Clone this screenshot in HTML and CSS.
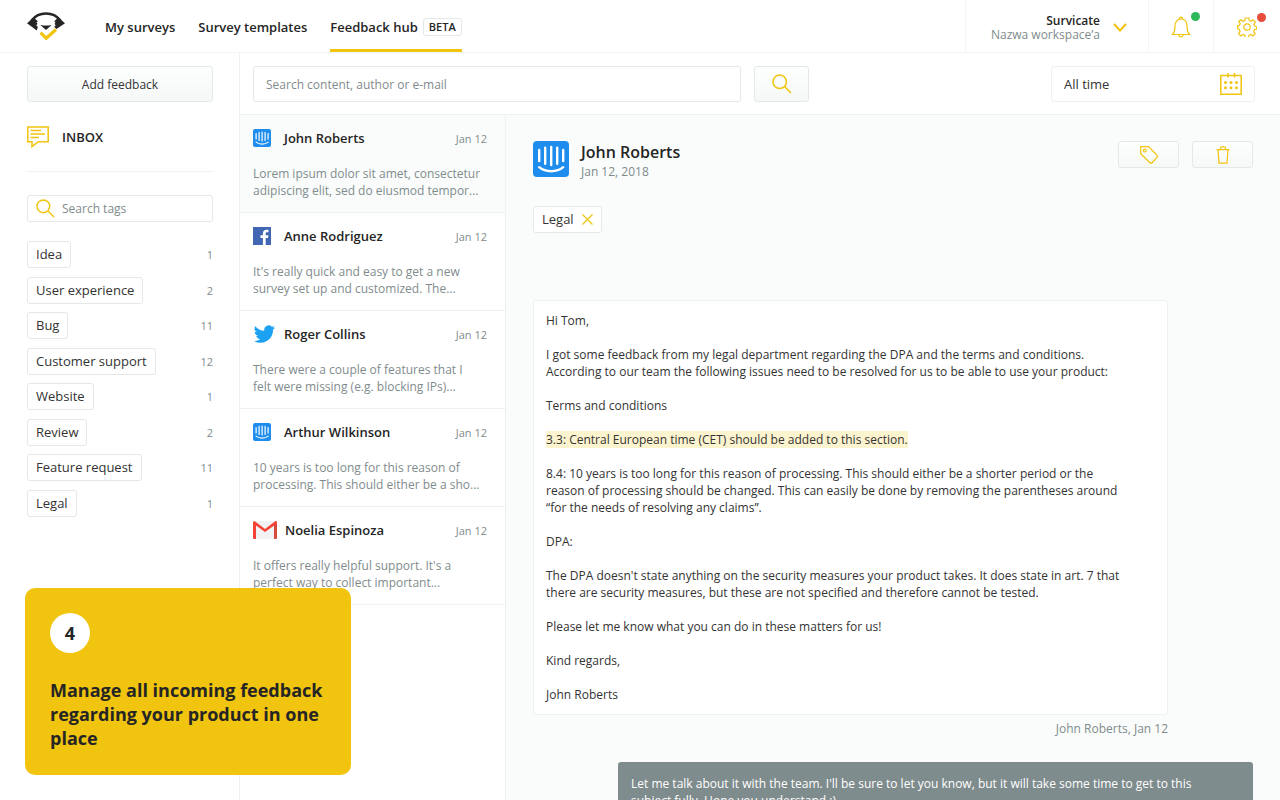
FILE: index.html
```html
<!DOCTYPE html>
<html lang="en">
<head>
<meta charset="utf-8">
<meta name="viewport" content="width=device-width, initial-scale=1">
<title>Feedback hub</title>
<link rel="stylesheet" href="styles.css">
</head>
<body>
<svg class="sprite" aria-hidden="true">
  <symbol id="intercom" viewBox="0 0 36 36">
    <rect width="36" height="36" rx="4" fill="#1f8ded"/>
    <g stroke="#fff" stroke-width="2.4" stroke-linecap="round" fill="none">
      <path d="M6.2 9v11M12.2 6.800v16M18.200 6v18M24.200 6.800v16M30.200 9v11"/>
      <path d="M6.200 26.200c6.500 5.400 17.500 5.400 24 0"/>
    </g>
  </symbol>
  <symbol id="magnifier" viewBox="0 0 20 20">
    <circle cx="7.700" cy="7.700" r="6.700"/><path d="M12.600 12.600L19 19"/>
  </symbol>
</svg>
<div class="app">
  <header class="header">
    <a class="logo" href="#" aria-label="Survicate">
      <svg width="38" height="29" viewBox="0 0 38 29">
        <path d="M4.500 8.500C12 -.8 26 -.8 33.500 8.500" fill="none" stroke="#252525" stroke-width="2.600"/>
        <path d="M0 11.300L6.600 5.600 10.800 9.300 9.500 10.600 10.500 11.800 9.300 13.200 10.800 15 9.800 18.500zM38 11.300L31.400 5.600 27.200 9.300 28.500 10.600 27.500 11.800 28.700 13.200 27.200 15 29.500 17z" fill="#252525"/>
        <path d="M13.300 13Q19 14.200 24.700 13L19 18z" fill="#252525"/>
        <path d="M13.600 20.700L19.200 26.300 29 17.500" fill="none" stroke="#f1c40f" stroke-width="3.200"/>
      </svg>
    </a>
    <nav class="nav">
      <a href="#">My surveys</a>
      <a href="#">Survey templates</a>
      <a href="#" class="active">Feedback hub <span class="beta">BETA</span></a>
    </nav>
    <button class="workspace">
      <span class="workspace-text"><strong>Survicate</strong><span>Nazwa workspace’a</span></span>
      <svg class="line bold" width="14" height="9" viewBox="0 0 14 9"><path d="M1 1l6 6.500L13 1"/></svg>
    </button>
    <button class="head-icon" aria-label="Notifications">
      <span class="icon-wrap">
        <svg class="line thin" width="20" height="22" viewBox="0 0 20 22"><path d="M1.500 18.500C3.800 16 4 14 4 10.500 4 6 6 3 10 3s6 3 6 7.500c0 3.500.2 5.500 2.500 8zM8.500 3V1.800Q10 .3 11.500 1.800V3M7.800 18.500Q8 21 10 21t2.200-2.500"/></svg>
        <span class="dot green"></span>
      </span>
    </button>
    <button class="head-icon settings" aria-label="Settings">
      <span class="icon-wrap">
        <svg class="line thin" width="20" height="20" viewBox="0 0 20 20"><circle cx="10" cy="10" r="3.200"/><path d="M8.300 1h3.400l.5 2.600 1.700.7 2.200-1.500 2.300 2.300-1.500 2.200.7 1.700 2.200.5v1.400l-.1 1.300-2.300.5-.7 1.700 1.500 2.200-2.300 2.300-2.200-1.500-1.700.7-.5 2.500H8.300l-.5-2.500-1.700-.7-2.200 1.500-2.300-2.300 1.500-2.200-.7-1.700L.6 11.700V8.800l1.900-.5.700-1.700-1.500-2.200L4 2.800l2.100 1.500 1.700-.7z"/></svg>
        <span class="dot red"></span>
      </span>
    </button>
  </header>

  <aside class="sidebar">
    <button class="btn add">Add feedback</button>
    <a class="inbox" href="#">
      <svg class="line" width="22" height="22" viewBox="0 0 22 22"><path d="M.8 1h20.400v14.700H11.400L5 20.600V15.700H.8zM3.500 4.500H14M3.500 8H18M3.500 11.500H12"/></svg>
      INBOX
    </a>
    <label class="tag-search">
      <svg class="line" width="19" height="19"><use href="#magnifier"/></svg>
      <input type="search" placeholder="Search tags" aria-label="Search tags">
    </label>
    <ul class="tags">
      <li><button class="chip">Idea</button><span>1</span></li>
      <li><button class="chip">User experience</button><span>2</span></li>
      <li><button class="chip">Bug</button><span>11</span></li>
      <li><button class="chip">Customer support</button><span>12</span></li>
      <li><button class="chip">Website</button><span>1</span></li>
      <li><button class="chip">Review</button><span>2</span></li>
      <li><button class="chip">Feature request</button><span>11</span></li>
      <li><button class="chip">Legal</button><span>1</span></li>
    </ul>
  </aside>

  <main class="main">
    <form class="toolbar">
      <input class="search" type="search" placeholder="Search content, author or e-mail" aria-label="Search feedback">
      <button class="btn search-btn" type="button" aria-label="Search"><svg class="line" width="20" height="20"><use href="#magnifier"/></svg></button>
      <button class="period" type="button">All time
        <svg class="line" width="22" height="22" viewBox="0 0 22 22"><path d="M.8 2.500h20.400v18.700H.8zM8 0v4.500M14.500 0v4.500"/><g class="solid"><circle cx="5.500" cy="9.500" r="1.500"/><circle cx="11" cy="9.500" r="1.500"/><circle cx="16.500" cy="9.500" r="1.500"/><circle cx="5.500" cy="14.700" r="1.500"/><circle cx="11" cy="14.700" r="1.500"/><circle cx="16.500" cy="14.700" r="1.500"/></g></svg>
      </button>
    </form>
    <div class="columns">
      <ul class="list">
        <li class="item selected">
          <div class="item-head"><svg width="18" height="18"><use href="#intercom"/></svg><h2>John Roberts</h2><time>Jan 12</time></div>
          <p>Lorem ipsum dolor sit amet, consectetur<br>adipiscing elit, sed do eiusmod tempor...</p>
        </li>
        <li class="item">
          <div class="item-head"><svg width="18" height="18" viewBox="0 0 18 18"><path fill="#4267b2" d="M0 0h18v18H0z"/><path fill="#fff" d="M9.900 18v-7H7.500V8.200h2.400V6.300c0-2.400 1.400-3.600 3.600-3.600l2 .1v2.500h-1.400c-1.100 0-1.400.6-1.400 1.400v1.500h2.700l-.4 2.800h-2.300v7z"/></svg><h2>Anne Rodriguez</h2><time>Jan 12</time></div>
          <p>It's really quick and easy to get a new<br>survey set up and customized. The...</p>
        </li>
        <li class="item">
          <div class="item-head"><svg class="wide" width="23" height="18" viewBox="0 1.800 24 20.200"><path fill="#1da1f2" d="M23.950 4.570a10 10 0 0 1-2.820.77 4.960 4.960 0 0 0 2.160-2.720c-.95.550-2 .95-3.130 1.180a4.920 4.920 0 0 0-8.380 4.480C7.690 8.100 4.070 6.130 1.640 3.160a4.900 4.900 0 0 0 1.520 6.570 4.900 4.900 0 0 1-2.230-.61v.06a4.920 4.920 0 0 0 3.950 4.830 5 5 0 0 1-2.210.08 4.940 4.940 0 0 0 4.600 3.420A9.870 9.870 0 0 1 0 19.540a14 14 0 0 0 7.550 2.210c9.050 0 14-7.500 14-13.980 0-.21 0-.42-.02-.63a9.940 9.940 0 0 0 2.420-2.570z"/></svg><h2>Roger Collins</h2><time>Jan 12</time></div>
          <p>There were a couple of features that I<br>felt were missing (e.g. blocking IPs)...</p>
        </li>
        <li class="item">
          <div class="item-head"><svg width="18" height="18"><use href="#intercom"/></svg><h2>Arthur Wilkinson</h2><time>Jan 12</time></div>
          <p>10 years is too long for this reason of<br>processing. This should either be a sho...</p>
        </li>
        <li class="item">
          <div class="item-head"><svg class="wide" width="24" height="18" viewBox="0 0 24 18"><path fill="#f2f2f2" d="M1 0h22v18H1z"/><path fill="#d54b3d" d="M21 2l3-1.500V17q0 1-1 1h-2z"/><path fill="#f44336" d="M3 18H1q-1 0-1-1V1.500Q0 0 1.500 0L12 8 22.500 0Q24 0 24 1.500V2.500L12 11 3 4.500z"/></svg><h2>Noelia Espinoza</h2><time>Jan 12</time></div>
          <p>It offers really helpful support. It's a<br>perfect way to collect important...</p>
        </li>
      </ul>
      <section class="detail">
        <div class="detail-head">
          <svg width="36" height="36"><use href="#intercom"/></svg>
          <div class="who"><h1>John Roberts</h1><time>Jan 12, 2018</time></div>
          <button class="btn action" aria-label="Tag"><svg class="line thin" width="18" height="18" viewBox="0 0 18 18"><path d="M.7.7H8.500L16.800 9Q18 10.500 16.800 11.700L12.300 16.500Q11 17.800 9.700 16.500L.7 7.800z"/><circle cx="4.800" cy="4.600" r="1.400"/></svg></button>
          <button class="btn action" aria-label="Delete"><svg class="line thin" width="14" height="18" viewBox="0 0 14 18"><path d="M.5 3.700h13M2 3.700l1 13.500h8l1-13.500M4.500 3.500V2.200Q4.500.8 6 .8h2q1.500 0 1.500 1.400v1.300"/></svg></button>
        </div>
        <button class="chip applied">Legal <svg class="line thin" width="11" height="11" viewBox="0 0 11 11"><path d="M.5.5l10 10M10.500.5l-10 10"/></svg></button>
        <article class="message">
          <p>Hi Tom,</p>
          <p>I got some feedback from my legal department regarding the DPA and the terms and conditions.<br>According to our team the following issues need to be resolved for us to be able to use your product:</p>
          <p>Terms and conditions</p>
          <p><mark>3.3: Central European time (CET) should be added to this section.</mark></p>
          <p>8.4: 10 years is too long for this reason of processing. This should either be a shorter period or the<br>reason of processing should be changed. This can easily be done by removing the parentheses around<br>“for the needs of resolving any claims”.</p>
          <p>DPA:</p>
          <p>The DPA doesn't state anything on the security measures your product takes. It does state in art. 7 that<br>there are security measures, but these are not specified and therefore cannot be tested.</p>
          <p>Please let me know what you can do in these matters for us!</p>
          <p>Kind regards,</p>
          <p>John Roberts</p>
        </article>
        <div class="signature">John Roberts, Jan 12</div>
        <article class="reply"><p>Let me talk about it with the team. I'll be sure to let you know, but it will take some time to get to this<br>subject fully. Hope you understand :)</p></article>
      </section>
    </div>
  </main>

  <div class="callout">
    <span class="step">4</span>
    <p>Manage all incoming feedback regarding your product in one place</p>
  </div>
</div>
</body>
</html>
```

FILE: styles.css
```css
* { box-sizing: border-box; }
:root {
  --line: #edf1f1;
  --edge: #e3e9e8;
  --muted: #7f8c8d;
  --yellow: #f1c40f;
}
body, h1, h2, p, ul { margin: 0; padding: 0; }
ul { list-style: none; }
body, button, input { font: 12px/17px "Open Sans", sans-serif; color: #333; }
button { background: none; border: 0; padding: 0; cursor: pointer; }
a { color: inherit; text-decoration: none; }
svg { display: block; flex: none; }
input { outline: 0; }
input::placeholder { color: var(--muted); opacity: 1; }
.sprite { position: absolute; width: 0; height: 0; }
.line { fill: none; stroke: var(--yellow); stroke-width: 1.5; }
.thin { stroke-width: 1.2; }
.bold { stroke-width: 2; }
.solid { fill: var(--yellow); stroke: none; }

.app {
  position: relative;
  display: grid;
  grid-template: auto minmax(0, 1fr) / 240px minmax(0, 1fr);
  height: 100vh;
  overflow: hidden;
  background: #fff;
}
.header {
  grid-column: 1 / -1;
  display: flex;
  align-items: stretch;
  min-height: 53px;
  padding-left: 27px;
  border-bottom: 1px solid #f4f6f6;
}
.logo { padding-top: 12px; margin-right: 40px; }
.nav { display: flex; flex: 1; gap: 23px; font-size: 13px; font-weight: 600; color: #252525; }
.nav a { display: flex; align-items: center; gap: 5px; padding-top: 5px; border-bottom: 3px solid transparent; }
.nav .active { border-color: var(--yellow); }
.beta { padding: 0 5px; border: 1px solid var(--edge); border-radius: 3px; font-size: 11px; line-height: 16px; }
.workspace { display: flex; align-items: center; gap: 13px; padding: 3px 21px 0 25px; border-left: 1px solid #f4f6f6; }
.workspace-text { display: grid; text-align: right; color: var(--muted); line-height: 14px; }
.workspace-text strong { font-weight: 600; color: #252525; }
.head-icon { display: grid; place-items: center; width: 65px; padding-top: 2px; border-left: 1px solid #f4f6f6; }
.settings { width: 67px; }
.icon-wrap { position: relative; }
.dot { position: absolute; top: -4px; right: -9px; width: 9px; height: 9px; border-radius: 50%; }
.green { background: #2eb85c; }
.red { background: #e74c3c; }

.btn {
  display: flex;
  align-items: center;
  justify-content: center;
  border: 1px solid var(--edge);
  border-radius: 3px;
  background: linear-gradient(#fdfefe, #f6f8f8);
}
.chip { padding: 4px 8px; border: 1px solid var(--edge); border-radius: 3px; background: #fff; font-size: 13px; }

.sidebar { padding: 13px 26px 0 27px; border-right: 1px solid var(--line); }
.add { width: 100%; min-height: 36px; }
.inbox {
  display: flex;
  align-items: center;
  gap: 13px;
  margin-bottom: 23px;
  padding: 24px 0 23px;
  border-bottom: 1px solid var(--line);
  font-size: 13px;
  font-weight: 600;
  color: #252525;
}
.tag-search { display: flex; align-items: center; gap: 7px; padding: 3px 8px; border: 1px solid var(--edge); border-radius: 3px; }
.tag-search input { flex: 1; min-width: 0; height: 17px; padding: 0; border: 0; }
.tags { display: flex; flex-direction: column; justify-content: space-between; min-height: 276px; margin-top: 19px; }
.tags li { display: flex; align-items: center; justify-content: space-between; font-size: 11px; color: var(--muted); }

.main { display: flex; flex-direction: column; min-height: 0; }
.toolbar { display: flex; align-items: center; padding: 13px 25px 12px 13px; border-bottom: 1px solid var(--line); }
.search { flex: 0 1 488px; min-width: 0; height: 36px; padding: 0 12px; border: 1px solid var(--edge); border-radius: 3px; }
.search-btn { width: 55px; height: 36px; margin-left: 13px; }
.period {
  display: flex;
  align-items: center;
  justify-content: space-between;
  width: 204px;
  height: 36px;
  margin-left: auto;
  padding: 0 12px;
  border: 1px solid var(--line);
  border-radius: 3px;
  font-size: 13px;
}
.columns { display: grid; grid-template-columns: 266px minmax(0, 1fr); flex: 1; min-height: 0; }
.list { border-right: 1px solid var(--line); }
.item { padding: 13px; border-bottom: 1px solid var(--line); }
.selected { background: #fafcfb; }
.item-head { display: flex; align-items: center; min-height: 20px; margin-bottom: 17px; padding-right: 5px; }
.item-head svg { margin-right: 13px; }
.item-head .wide { margin-right: 8px; }
.item-head h2 { flex: 1; font-size: 13px; font-weight: 600; color: #252525; }
.item-head time { font-size: 11px; color: var(--muted); }
.item p { color: var(--muted); }

.detail { padding: 26px 27px 0; background: #fafcfb; overflow: hidden; }
.detail-head { display: flex; align-items: flex-start; }
.who { flex: 1; padding-left: 12px; color: var(--muted); }
.who h1 { font-size: 16px; line-height: 22px; font-weight: 600; color: #252525; }
.who time { display: block; }
.action { width: 61px; height: 27px; margin-left: 13px; }
.applied { display: flex; align-items: center; gap: 8px; margin: 26px 0 67px; }
.message { display: grid; gap: 17px; margin-right: 85px; padding: 11px 12px; border: 1px solid var(--line); border-radius: 3px; background: #fff; }
.message mark { background: #fcf3cf; color: inherit; }
.signature { margin: 5px 85px 25px 0; text-align: right; color: var(--muted); }
.reply { margin-left: 85px; padding: 13px; border-radius: 3px; background: #7f8c8d; color: #fff; }

.callout {
  position: absolute;
  left: 25px;
  bottom: 25px;
  width: 326px;
  padding: 25px;
  border-radius: 10px;
  background: var(--yellow);
  color: #252525;
  font-size: 18px;
  line-height: 24px;
  font-weight: 700;
}
.step { display: grid; place-items: center; width: 40px; height: 40px; margin-bottom: 25px; border-radius: 50%; background: #fff; }
```
